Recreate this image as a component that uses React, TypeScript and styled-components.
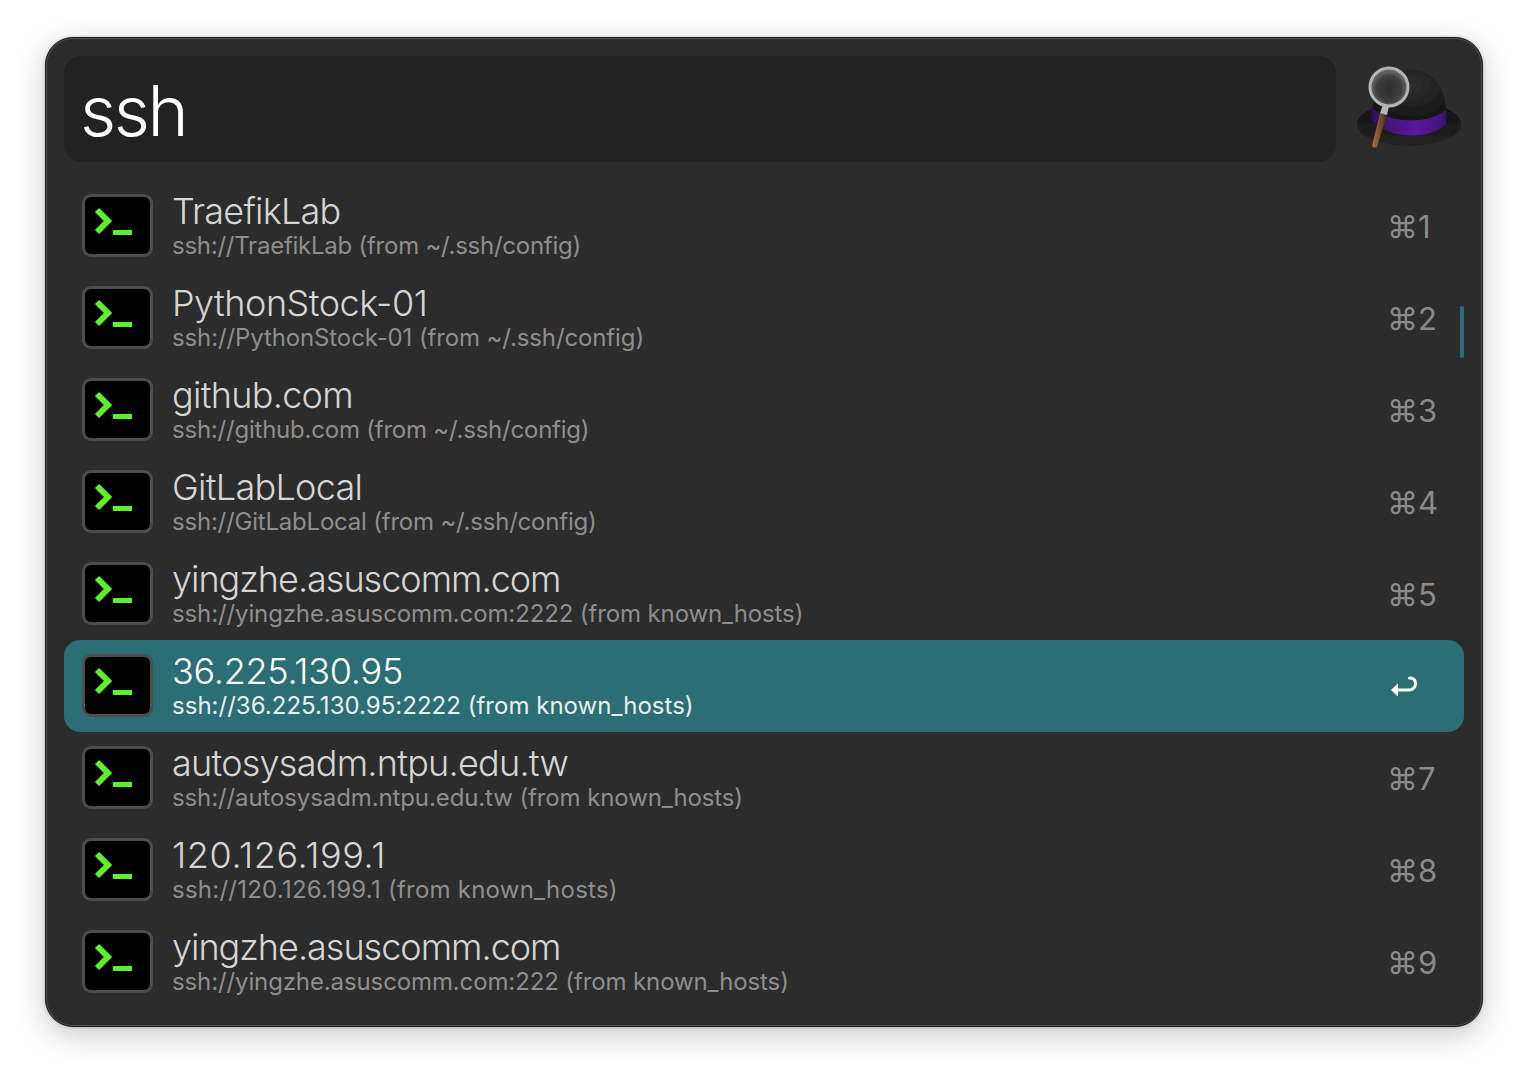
import React from "react";
import styled, { createGlobalStyle } from "styled-components";

const GlobalStyle = createGlobalStyle`
  html, body {
    margin: 0;
    background: #ffffff;
    font-family: Inter, "Liberation Sans", "DejaVu Sans", sans-serif;
  }
`;

const Page = styled.div`
  width: 1528px;
  height: 1080px;
  box-sizing: border-box;
  padding: 37px 45px 53px;
  overflow: hidden;
`;

const Window = styled.div`
  position: relative;
  box-sizing: border-box;
  height: 990px;
  padding: 18px 18px 0;
  border: 1px solid #1b1b1b;
  border-radius: 28px;
  background: #2c2c2c;
  box-shadow: inset 0 0 0 1px #515151, 0 8px 30px rgba(0, 0, 0, 0.22), 0 0 3px rgba(0, 0, 0, 0.25);
`;

const SearchRow = styled.div`
  display: flex;
  align-items: center;
  gap: 20px;
  height: 106px;
`;

const SearchBox = styled.div`
  flex: 1;
  height: 106px;
  box-sizing: border-box;
  padding-left: 16px;
  border-radius: 17px;
  background: #222222;
  color: #ffffff;
  font-size: 70px;
  font-weight: 300;
  line-height: 110px;
  letter-spacing: -2.4px;
`;

const HatWrap = styled.div`
  width: 108px;
  height: 106px;
  flex: none;
`;

const List = styled.div`
  margin-top: 18px;
`;

const Row = styled.div<{ $selected?: boolean }>`
  display: flex;
  align-items: center;
  height: 92px;
  padding: 0 31px 0 18px;
  border-radius: 16px;
  background: ${(p) => (p.$selected ? "#2c6e75" : "transparent")};
`;

const TerminalTile = styled.div`
  display: flex;
  flex: none;
  width: 71px;
  height: 63px;
  margin-bottom: 1px;
  box-sizing: border-box;
  border: 3px solid #4d4d4d;
  border-radius: 9px;
  background: #000000;
`;

const Texts = styled.div`
  flex: 1;
  display: flex;
  flex-direction: column;
  margin-left: 19px;
  padding-bottom: 2px;
`;

const Title = styled.div<{ $selected?: boolean; $tracking: number }>`
  color: ${(p) => (p.$selected ? "#ffffff" : "#d5d5d5")};
  font-size: 36px;
  font-weight: 340;
  line-height: 42px;
  letter-spacing: ${(p) => p.$tracking}px;
`;

const Subtitle = styled.div<{ $selected?: boolean; $tracking: number }>`
  color: ${(p) => (p.$selected ? "#e8f0f1" : "#8e8e8e")};
  font-size: 24px;
  font-weight: 400;
  line-height: 28px;
  letter-spacing: ${(p) => p.$tracking}px;
`;

const Shortcut = styled.div`
  display: flex;
  align-items: center;
  flex: none;
  width: 46px;
  color: #8a8a8a;
  font-size: 31px;
  font-weight: 400;
  white-space: nowrap;
`;

const ReturnSvg = styled.svg`
  margin-left: 3px;
  flex: none;
`;

const ScrollThumb = styled.div`
  position: absolute;
  top: 268px;
  right: 18px;
  width: 4px;
  height: 52px;
  border-radius: 2px;
  background: #2c6e75;
`;

const TerminalIcon = () => (
  <svg width="65" height="57" viewBox="0 0 65 57">
    <path d="M12 13 L23 24 L12 35" fill="none" stroke="#5ef02c" strokeWidth="6" />
    <rect x="28" y="33" width="19" height="5" fill="#5ef02c" />
  </svg>
);

const ReturnIcon = () => (
  <ReturnSvg width="30" height="24" viewBox="0 0 30 24">
    <path
      d="M19.5 4 C24 4 25.5 6.5 25.5 9.5 C25.5 13 23 16 19.5 16 H6"
      fill="none"
      stroke="#ffffff"
      strokeWidth="3"
      strokeLinecap="round"
    />
    <path d="M1 16 L8 9.5 V22.5 Z" fill="#ffffff" />
  </ReturnSvg>
);

const HatIcon = () => (
  <svg width="108" height="106" viewBox="0 0 108 106">
    <defs>
      <radialGradient id="crown" cx="0.55" cy="0.25" r="0.8">
        <stop offset="0" stopColor="#2e2e2e" />
        <stop offset="1" stopColor="#0f0f0f" />
      </radialGradient>
      <linearGradient id="brim" x1="0" y1="0" x2="0" y2="1">
        <stop offset="0" stopColor="#101010" />
        <stop offset="1" stopColor="#242424" />
      </linearGradient>
      <linearGradient id="band" x1="0" y1="0" x2="1" y2="0">
        <stop offset="0" stopColor="#330f63" />
        <stop offset="0.6" stopColor="#5a189c" />
        <stop offset="1" stopColor="#3c1172" />
      </linearGradient>
      <radialGradient id="glass" cx="0.5" cy="0.55" r="0.55">
        <stop offset="0" stopColor="#2c2c2c" />
        <stop offset="0.6" stopColor="#3e3e3e" />
        <stop offset="1" stopColor="#7a7a7a" />
      </radialGradient>
      <linearGradient id="handle" x1="0" y1="0" x2="1" y2="0">
        <stop offset="0" stopColor="#a8733f" />
        <stop offset="1" stopColor="#4d2e15" />
      </linearGradient>
      <filter id="soft">
        <feGaussianBlur stdDeviation="0.5" />
      </filter>
    </defs>
    <g filter="url(#soft)">
      <ellipse cx="53" cy="68" rx="52" ry="22" fill="url(#brim)" />
      <path
        d="M16 60 C16 30 30 14 54 14 C78 14 90 32 90 58 C75 78 35 78 16 60 Z"
        fill="url(#crown)"
      />
      <path d="M16 52 C30 66 70 70 90 54 L90 68 C75 84 32 84 16 64 Z" fill="url(#band)" />
      <path d="M24 57 L31 58 L21 91 Q18 93 16 90 Z" fill="url(#handle)" />
      <path d="M27 49 L33 50 L31 59 L24 57 Z" fill="#b5b5b5" />
      <circle cx="33" cy="31" r="19" fill="url(#glass)" stroke="#b4b4b4" strokeWidth="3" />
    </g>
  </svg>
);

type Item = {
  title: string;
  subtitle: string;
  key?: string;
  titleTracking: number;
  subTracking: number;
};

// Inter's digits and punctuation run narrower than the original, so tracking differs per row
const items: Item[] = [
  { title: "TraefikLab", subtitle: "ssh://TraefikLab (from ~/.ssh/config)", key: "⌘1", titleTracking: -0.75, subTracking: -0.25 },
  { title: "PythonStock-01", subtitle: "ssh://PythonStock-01 (from ~/.ssh/config)", key: "⌘2", titleTracking: -0.5, subTracking: -0.12 },
  { title: "github.com", subtitle: "ssh://github.com (from ~/.ssh/config)", key: "⌘3", titleTracking: -0.7, subTracking: -0.22 },
  { title: "GitLabLocal", subtitle: "ssh://GitLabLocal (from ~/.ssh/config)", key: "⌘4", titleTracking: -0.7, subTracking: -0.21 },
  { title: "yingzhe.asuscomm.com", subtitle: "ssh://yingzhe.asuscomm.com:2222 (from known_hosts)", key: "⌘5", titleTracking: -1, subTracking: -0.12 },
  { title: "36.225.130.95", subtitle: "ssh://36.225.130.95:2222 (from known_hosts)", titleTracking: -0.25, subTracking: 0.02 },
  { title: "autosysadm.ntpu.edu.tw", subtitle: "ssh://autosysadm.ntpu.edu.tw (from known_hosts)", key: "⌘7", titleTracking: -0.75, subTracking: -0.11 },
  { title: "120.126.199.1", subtitle: "ssh://120.126.199.1 (from known_hosts)", key: "⌘8", titleTracking: 0.6, subTracking: 0.24 },
  { title: "yingzhe.asuscomm.com", subtitle: "ssh://yingzhe.asuscomm.com:222 (from known_hosts)", key: "⌘9", titleTracking: -1, subTracking: -0.12 },
];

const App = () => (
  <Page>
    <GlobalStyle />
    <Window>
      <SearchRow>
        <SearchBox>ssh</SearchBox>
        <HatWrap>
          <HatIcon />
        </HatWrap>
      </SearchRow>
      <List>
        {items.map((item) => {
          const selected = !item.key;
          return (
            <Row key={item.subtitle} $selected={selected}>
              <TerminalTile>
                <TerminalIcon />
              </TerminalTile>
              <Texts>
                <Title $selected={selected} $tracking={item.titleTracking}>{item.title}</Title>
                <Subtitle $selected={selected} $tracking={item.subTracking}>{item.subtitle}</Subtitle>
              </Texts>
              <Shortcut>{item.key ?? <ReturnIcon />}</Shortcut>
            </Row>
          );
        })}
      </List>
      <ScrollThumb />
    </Window>
  </Page>
);

export default App;
